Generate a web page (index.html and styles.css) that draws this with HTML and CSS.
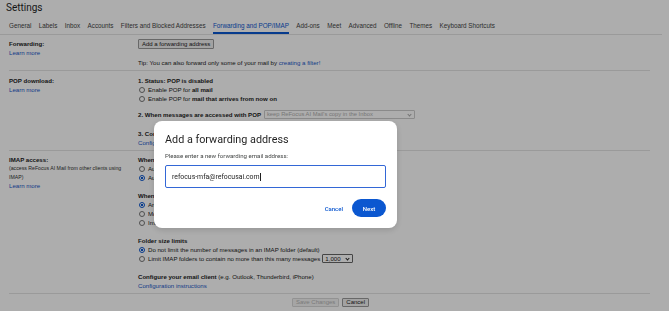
FILE: index.html
```html
<!DOCTYPE html>
<html lang="en">
<head>
    <meta charset="UTF-8">
    <meta name="viewport" content="width=device-width, initial-scale=1.0">
    <title>Settings</title>
    <link rel="stylesheet" href="styles.css">
</head>
<body>

<div class="settings">
    <h1 class="title">Settings</h1>

    <div class="tabs">
        <span class="tab">General</span>
        <span class="tab">Labels</span>
        <span class="tab">Inbox</span>
        <span class="tab">Accounts</span>
        <span class="tab">Filters and Blocked Addresses</span>
        <span class="tab active">Forwarding and POP/IMAP</span>
        <span class="tab">Add-ons</span>
        <span class="tab">Meet</span>
        <span class="tab">Advanced</span>
        <span class="tab">Offline</span>
        <span class="tab">Themes</span>
        <span class="tab">Keyboard Shortcuts</span>
    </div>

    <div class="section forwarding">
        <div class="label">
            <b>Forwarding:</b>
            <a href="#">Learn more</a>
        </div>
        <div class="content">
            <button class="btn">Add a forwarding address</button>
            <p class="tip">Tip: You can also forward only some of your mail by <a href="#">creating a filter!</a></p>
        </div>
    </div>

    <div class="section pop">
        <div class="label">
            <b>POP download:</b>
            <a href="#">Learn more</a>
        </div>
        <div class="content">
            <div class="group">
                <b>1. Status: POP is disabled</b>
                <div class="opt"><span class="radio"></span>Enable POP for&nbsp;<b>all mail</b></div>
                <div class="opt"><span class="radio"></span>Enable POP for&nbsp;<b>mail that arrives from now on</b></div>
            </div>
            <div class="group pop-when">
                <div class="opt"><b>2. When messages are accessed with POP</b>
                    <span class="select disabled wide">keep ReFocus AI Mail's copy in the Inbox<span class="caret"></span></span>
                </div>
            </div>
            <div class="group">
                <b>3. Configure your email client</b> (e.g. Outlook, Eudora, Netscape Mail)
                <div><a href="#">Configuration instructions</a></div>
            </div>
        </div>
    </div>

    <div class="section imap">
        <div class="label">
            <b>IMAP access:</b>
            <span class="note">(access ReFocus AI Mail from other clients using IMAP)</span>
            <a href="#">Learn more</a>
        </div>
        <div class="content">
            <div class="group">
                <b>When I mark a message in IMAP as deleted:</b>
                <div class="opt"><span class="radio"></span>Auto-Expunge on - Immediately update the server. (default)</div>
                <div class="opt"><span class="radio checked"></span>Auto-Expunge off - Wait for the client to update the server.</div>
            </div>
            <div class="group">
                <b>When a message is marked as deleted and expunged from the last visible IMAP folder:</b>
                <div class="opt"><span class="radio checked"></span>Archive the message (default)</div>
                <div class="opt"><span class="radio"></span>Move the message to the Trash</div>
                <div class="opt"><span class="radio"></span>Immediately delete the message forever</div>
            </div>
            <div class="group">
                <b>Folder size limits</b>
                <div class="opt"><span class="radio checked"></span>Do not limit the number of messages in an IMAP folder (default)</div>
                <div class="opt"><span class="radio"></span>Limit IMAP folders to contain no more than this many messages
                    <span class="select small">1,000<span class="caret dark"></span></span>
                </div>
            </div>
            <div class="group">
                <b>Configure your email client</b> (e.g. Outlook, Thunderbird, iPhone)
                <div><a href="#">Configuration instructions</a></div>
            </div>
        </div>
    </div>

    <div class="actions">
        <button class="btn" disabled>Save Changes</button>
        <button class="btn">Cancel</button>
    </div>
</div>

<div class="scrim"></div>

<div class="dialog">
    <h2>Add a forwarding address</h2>
    <p class="hint">Please enter a new forwarding email address:</p>
    <div class="field">refocus-mfa@refocusai.com<span class="cursor"></span></div>
    <div class="dialog-actions">
        <button class="text-btn">Cancel</button>
        <button class="next-btn">Next</button>
    </div>
</div>

</body>
</html>
```

FILE: styles.css
```css
body {
    margin: 0;
    background: #ffffff;
    font-family: "Liberation Sans", Arial, sans-serif;
    color: #222222;
    overflow: hidden;
}
.settings {
    width: 662px;
    font-size: 6.1px;
    line-height: 9px;
}
a {
    color: #1a57c9;
    text-decoration: none;
}
.title {
    margin: 0;
    padding-left: 6px;
    font-family: Roboto, sans-serif;
    font-size: 10px;
    font-weight: 400;
    line-height: 15px;
    color: #1f1f1f;
}
.tabs {
    display: flex;
    gap: 7.4px;
    margin-top: 4px;
    padding-left: 9px;
    border-bottom: 1px solid #e4e4e4;
    font-size: 6.3px;
    color: #444444;
}
.tab {
    line-height: 13px;
    border-bottom: 2px solid transparent;
}
.tab.active {
    color: #0b57d0;
    border-bottom-color: #0b57d0;
}
.section {
    display: grid;
    grid-template-columns: 129px 1fr;
    margin: 0 12px 0 9px;
    border-bottom: 1px solid #e4e4e4;
}
.label {
    display: flex;
    flex-direction: column;
    align-items: flex-start;
}
.forwarding {
    padding: 4px 0 3px;
}
.pop {
    padding: 5px 0 3px;
}
.imap {
    padding: 4px 0 3px;
}
.btn {
    height: 10px;
    padding: 0 3px;
    border: 1px solid #9a9a9a;
    border-radius: 1px;
    background: #efefef;
    font-family: "Liberation Sans", Arial, sans-serif;
    font-size: 6px;
    line-height: 8px;
    color: #222222;
}
.btn:disabled {
    border-color: #d8d8d8;
    background: #f4f4f4;
    color: #b4b4b4;
}
.tip {
    margin: 9px 0 0;
}
.group + .group {
    margin-top: 9px;
}
.pop .pop-when {
    margin-top: 7px;
}
.pop .pop-when + .group {
    margin-top: 10px;
}
.opt {
    display: flex;
    align-items: center;
    height: 9px;
    white-space: nowrap;
}
.radio {
    width: 4px;
    height: 4px;
    margin: 0 3px 0 1px;
    border: 0.8px solid #777777;
    border-radius: 50%;
}
.radio.checked {
    border-color: #0b57d0;
    background: radial-gradient(circle, #0b57d0 0 45%, #ffffff 55%);
}
.note {
    font-size: 5.2px;
    line-height: 9px;
    width: 120px;
    color: #333333;
}
.imap .label a {
    line-height: 8px;
}
.select {
    display: inline-flex;
    align-items: center;
    justify-content: space-between;
    height: 7px;
    margin-left: 3px;
    padding: 0 2px;
    border: 0.8px solid #cccccc;
    border-radius: 1px;
    line-height: 7px;
}
.select.wide {
    width: 145px;
    font-size: 5.8px;
}
.select.disabled {
    color: #b0b0b0;
}
.select.small {
    width: 25px;
    margin-left: 2px;
    border-color: #666666;
}
.caret {
    width: 2px;
    height: 2px;
    margin: -1px 1px 0 0;
    border-right: 0.8px solid #aaaaaa;
    border-bottom: 0.8px solid #aaaaaa;
    transform: rotate(45deg);
}
.caret.dark {
    border-color: #222222;
}
.actions {
    display: flex;
    justify-content: center;
    gap: 3px;
    padding: 4px 0 0 0;
    width: 661px;
}
.actions .btn {
    height: 9px;
    line-height: 7px;
}
.scrim {
    position: fixed;
    inset: 0;
    background: rgba(0, 0, 0, 0.32);
}
.dialog {
    position: fixed;
    left: 154px;
    top: 121px;
    width: 243px;
    height: 107px;
    box-sizing: border-box;
    padding: 11px 11px 0;
    background: #ffffff;
    border-radius: 8px;
    box-shadow: 0 2px 6px rgba(0, 0, 0, 0.15);
    font-family: Roboto, sans-serif;
}
.dialog h2 {
    margin: 0;
    font-size: 10.8px;
    font-weight: 400;
    line-height: 16px;
    color: #1f1f1f;
}
.hint {
    margin: 4px 0 0;
    font-size: 6.1px;
    line-height: 8px;
    color: #444746;
}
.field {
    display: flex;
    align-items: center;
    height: 23px;
    margin-top: 5px;
    padding-left: 6px;
    box-sizing: border-box;
    border: 1.5px solid #3367d6;
    border-radius: 2px;
    font-size: 6.9px;
    color: #1f1f1f;
}
.cursor {
    width: 0.8px;
    height: 8px;
    margin-left: 0.5px;
    background: #1f1f1f;
}
.dialog-actions {
    display: flex;
    justify-content: flex-end;
    align-items: center;
    gap: 9px;
    margin-top: 11px;
}
.text-btn {
    padding: 0;
    border: none;
    background: none;
    font-family: Roboto, sans-serif;
    font-size: 6px;
    font-weight: 500;
    color: #0b57d0;
}
.next-btn {
    width: 34px;
    height: 18px;
    border: none;
    border-radius: 9px;
    background: #0b57d0;
    font-family: Roboto, sans-serif;
    font-size: 6px;
    font-weight: 500;
    color: #ffffff;
}
```
